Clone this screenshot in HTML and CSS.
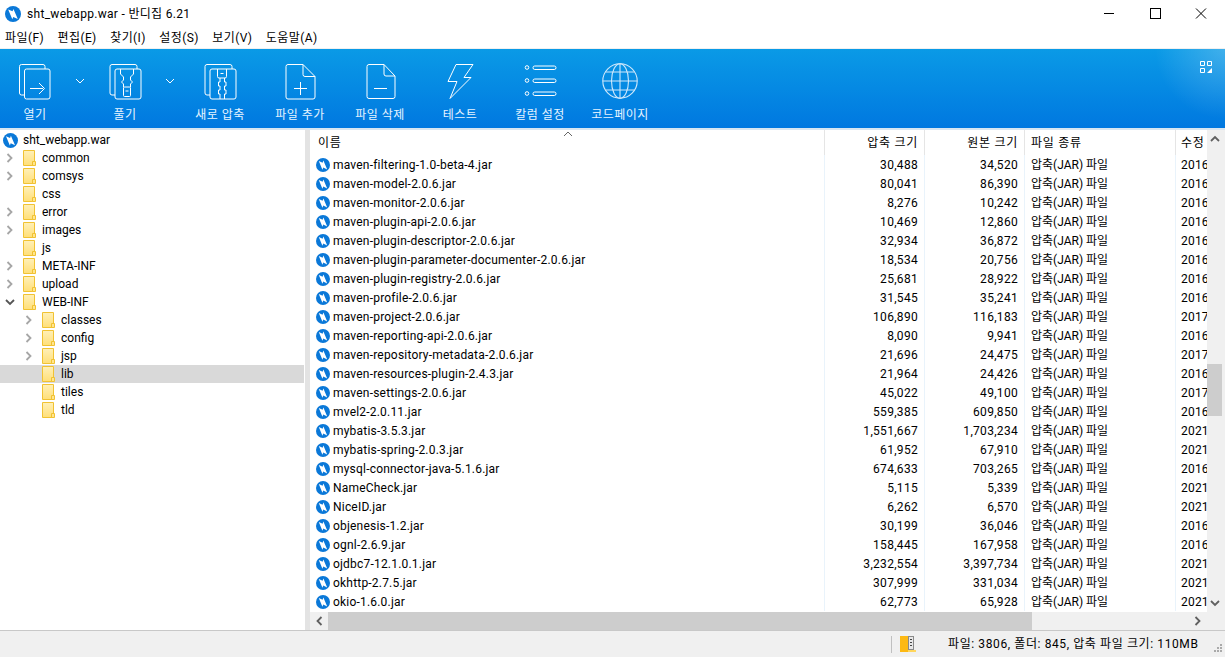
FILE: index.html
```html
<!DOCTYPE html>
<html lang="ko">
<head>
    <meta charset="UTF-8">
    <title>sht_webapp.war - 반디집 6.21</title>
    <link rel="stylesheet" href="styles.css">
</head>
<body>
    <svg class="defs" width="0" height="0">
        <defs>
            <linearGradient id="folderFill" x1="0" y1="0" x2="0" y2="1">
                <stop offset="0" stop-color="#fff0b8"/>
                <stop offset="1" stop-color="#ffdf78"/>
            </linearGradient>
        </defs>
        <symbol id="bz" viewBox="0 0 14 14">
            <circle cx="7" cy="7" r="7" fill="#0a78d8"/>
            <path d="M2.800 3 6.600 4.700 7.400 2.600l3.800 8.800-4-1.800-.8 2.100z" fill="#fff"/>
        </symbol>
        <symbol id="folder" viewBox="0 0 13 16">
            <path d="M.5.5h11v13.500h-1.500v1.500H.5z" fill="url(#folderFill)" stroke="#f1c232"/>
            <path d="M9.500 15.500v-4h3v4z" fill="#ffe58f" stroke="#f1c232"/>
        </symbol>
        <symbol id="right" viewBox="0 0 10 12">
            <path d="M2.500 2 6.500 6l-4 4" fill="none" stroke="currentColor" stroke-width="1.800"/>
        </symbol>
        <symbol id="down" viewBox="0 0 10 12">
            <path d="M1 4l4 4 4-4" fill="none" stroke="currentColor" stroke-width="1.800"/>
        </symbol>
        <symbol id="caret" viewBox="0 0 10 6">
            <path d="M1 1l4 4 4-4" fill="none" stroke="currentColor"/>
        </symbol>
    </svg>

    <header class="titlebar">
        <svg class="title-icon"><use href="#bz"/></svg>
        <span class="title-text">sht_webapp.war - 반디집 6.21</span>
        <div class="win-buttons">
            <svg class="win-btn" viewBox="0 0 46 20"><path d="M18 9.500h10" stroke="#000"/></svg>
            <svg class="win-btn" viewBox="0 0 46 20"><rect x="18.500" y="4.500" width="10" height="10" fill="none" stroke="#000"/></svg>
            <svg class="win-btn" viewBox="0 0 46 20"><path d="M18 4.500l10 10M28 4.500l-10 10" stroke="#000" fill="none"/></svg>
        </div>
    </header>

    <nav class="menubar">
        <span>파일(F)</span>
        <span>편집(E)</span>
        <span>찾기(I)</span>
        <span>설정(S)</span>
        <span>보기(V)</span>
        <span>도움말(A)</span>
    </nav>

    <section class="toolbar">
        <div class="tool tool-split">
            <svg class="tool-icon" viewBox="0 0 40 40">
                <path d="M9.500 35H6.500a2 2 0 0 1-2-2V6.500a2 2 0 0 1 2-2H28a2 2 0 0 1 2 2V9"/>
                <rect x="9.500" y="9" width="25.500" height="30" rx="2"/>
                <path d="M15 28.500h13M24 23l5.500 5.500-5.500 5.500"/>
            </svg>
            <span>열기</span>
        </div>
        <svg class="tool-caret"><use href="#caret"/></svg>
        <div class="tool tool-split">
            <svg class="tool-icon" viewBox="0 0 40 40">
                <path d="M10 35H7a2 2 0 0 1-2-2V6.500a2 2 0 0 1 2-2h23a2 2 0 0 1 2 2V9"/>
                <rect x="10" y="9" width="26" height="30" rx="2"/>
                <path d="M15.500 9v5l3 3v3l-2 2 2 2v3M28.500 9v5l-3 3v3l2 2-2 2v3"/>
                <rect x="18.500" y="27" width="7" height="9.500" rx="1"/>
                <path d="M20.500 31h3"/>
            </svg>
            <span>풀기</span>
        </div>
        <svg class="tool-caret"><use href="#caret"/></svg>
        <div class="tool">
            <svg class="tool-icon" viewBox="0 0 40 40">
                <path d="M10 35H7a2 2 0 0 1-2-2V6.500a2 2 0 0 1 2-2h23a2 2 0 0 1 2 2V9"/>
                <rect x="10" y="9" width="26" height="30" rx="2"/>
                <path d="M17.500 9v7.500a1.500 1.500 0 0 0 1.500 1.500h6a1.500 1.500 0 0 0 1.500-1.500V9M20.500 13.500h3"/>
                <path d="M20 18v4h-1.500v4H20v4h-1.500v4H20v5M24.500 18v4H26v4h-1.500v4H26v4h-1.500v5"/>
            </svg>
            <span>새로 압축</span>
        </div>
        <div class="tool">
            <svg class="tool-icon" viewBox="0 0 40 40">
                <path d="M23 4.500H8a2 2 0 0 0-2 2V37a2 2 0 0 0 2 2h25a2 2 0 0 0 2-2V16.500z"/>
                <path d="M23 4.500v10a2 2 0 0 0 2 2h10"/>
                <path d="M20.500 22v13M14 28.500h13"/>
            </svg>
            <span>파일 추가</span>
        </div>
        <div class="tool">
            <svg class="tool-icon" viewBox="0 0 40 40">
                <path d="M24 4.500H9a2 2 0 0 0-2 2V36.500a2 2 0 0 0 2 2h24a2 2 0 0 0 2-2V16z"/>
                <path d="M24 4.500v9.500a2 2 0 0 0 2 2h9"/>
                <path d="M14 28.500h13"/>
            </svg>
            <span>파일 삭제</span>
        </div>
        <div class="tool">
            <svg class="tool-icon" viewBox="0 0 40 40">
                <path d="M16 4.500h17L24 17.500h7L10 38.500l7-17H8z"/>
            </svg>
            <span>테스트</span>
        </div>
        <div class="tool">
            <svg class="tool-icon" viewBox="0 0 40 40">
                <circle cx="7" cy="7.500" r="1.800"/>
                <circle cx="7" cy="20.500" r="1.800"/>
                <circle cx="7" cy="33.500" r="1.800"/>
                <rect x="13" y="6" width="23" height="3.500" rx="1.700"/>
                <rect x="13" y="19" width="23" height="3.500" rx="1.700"/>
                <rect x="13" y="32" width="23" height="3.500" rx="1.700"/>
            </svg>
            <span>칼럼 설정</span>
        </div>
        <div class="tool">
            <svg class="tool-icon globe" viewBox="0 0 40 40">
                <circle cx="20" cy="21" r="17.200"/>
                <ellipse cx="20" cy="21" rx="8.500" ry="17.200"/>
                <path d="M20 3.800v34.400M2.800 21h34.400M5.500 12h29M5.500 30h29"/>
            </svg>
            <span>코드페이지</span>
        </div>
        <svg class="view-toggle" viewBox="0 0 12 12">
            <path d="M.5.5h4v4h-4zM7.500.5h4v4h-4zM.5 7.500h4v4h-4z" fill="none" stroke="#fff"/>
            <path d="M12 7v5H7z" fill="#fff"/>
        </svg>
    </section>

    <main class="content">
        <aside class="tree">
            <div class="node root"><svg class="node-logo"><use href="#bz"/></svg>sht_webapp.war</div>
            <div class="node"><svg class="arrow"><use href="#right"/></svg><svg class="folder"><use href="#folder"/></svg>common</div>
            <div class="node"><svg class="arrow"><use href="#right"/></svg><svg class="folder"><use href="#folder"/></svg>comsys</div>
            <div class="node no-arrow"><svg class="folder"><use href="#folder"/></svg>css</div>
            <div class="node"><svg class="arrow"><use href="#right"/></svg><svg class="folder"><use href="#folder"/></svg>error</div>
            <div class="node"><svg class="arrow"><use href="#right"/></svg><svg class="folder"><use href="#folder"/></svg>images</div>
            <div class="node no-arrow"><svg class="folder"><use href="#folder"/></svg>js</div>
            <div class="node"><svg class="arrow"><use href="#right"/></svg><svg class="folder"><use href="#folder"/></svg>META-INF</div>
            <div class="node"><svg class="arrow"><use href="#right"/></svg><svg class="folder"><use href="#folder"/></svg>upload</div>
            <div class="node"><svg class="arrow open"><use href="#down"/></svg><svg class="folder"><use href="#folder"/></svg>WEB-INF</div>
            <div class="node sub"><svg class="arrow"><use href="#right"/></svg><svg class="folder"><use href="#folder"/></svg>classes</div>
            <div class="node sub"><svg class="arrow"><use href="#right"/></svg><svg class="folder"><use href="#folder"/></svg>config</div>
            <div class="node sub"><svg class="arrow"><use href="#right"/></svg><svg class="folder"><use href="#folder"/></svg>jsp</div>
            <div class="node sub no-arrow selected"><svg class="folder"><use href="#folder"/></svg>lib</div>
            <div class="node sub no-arrow"><svg class="folder"><use href="#folder"/></svg>tiles</div>
            <div class="node sub no-arrow"><svg class="folder"><use href="#folder"/></svg>tld</div>
        </aside>
        <div class="splitter"></div>
        <section class="list">
            <div class="list-view">
                <div class="list-main">
                    <div class="row head">
                        <div class="c-name">이름<svg class="sort"><use href="#caret"/></svg></div>
                        <div class="c-num">압축 크기</div>
                        <div class="c-num">원본 크기</div>
                        <div class="c-type">파일 종류</div>
                        <div class="c-date">수정</div>
                    </div>
                    <div id="rows"></div>
                </div>
                <div class="vscroll">
                    <svg class="sb-up"><use href="#down"/></svg>
                    <div class="vthumb"></div>
                    <svg class="sb-down"><use href="#down"/></svg>
                </div>
            </div>
            <div class="hscroll">
                <svg class="sb-left"><use href="#right"/></svg>
                <div class="hthumb"></div>
                <svg class="sb-right"><use href="#right"/></svg>
            </div>
        </section>
    </main>

    <footer class="statusbar">
        <div class="status-sep"></div>
        <svg class="status-icon" viewBox="0 0 16 16">
            <path d="M0 0h8v16H0z" fill="#fdb913"/>
            <path d="M8 0h6v14H8z" fill="#8a8a8a"/>
            <path d="M9 1h4v12H9z" fill="#e8e8e8"/>
            <path d="M10 3h2v1h-2zM10 6h2v1h-2zM10 9h2v1h-2z" fill="#444"/>
            <path d="M8 14h8v2H8z" fill="#ffd65c"/>
        </svg>
        <span class="status-text">파일: 3806, 폴더: 845, 압축 파일 크기: 110MB</span>
        <svg class="grip" viewBox="0 0 12 12">
            <path d="M9 1h2v2H9zM6 4h2v2H6zM9 4h2v2H9zM3 7h2v2H3zM6 7h2v2H6zM9 7h2v2H9z" fill="#aaa"/>
        </svg>
    </footer>

    <script>
        const files = [
            ['maven-filtering-1.0-beta-4.jar', '30,488', '34,520', '2016'],
            ['maven-model-2.0.6.jar', '80,041', '86,390', '2016'],
            ['maven-monitor-2.0.6.jar', '8,276', '10,242', '2016'],
            ['maven-plugin-api-2.0.6.jar', '10,469', '12,860', '2016'],
            ['maven-plugin-descriptor-2.0.6.jar', '32,934', '36,872', '2016'],
            ['maven-plugin-parameter-documenter-2.0.6.jar', '18,534', '20,756', '2016'],
            ['maven-plugin-registry-2.0.6.jar', '25,681', '28,922', '2016'],
            ['maven-profile-2.0.6.jar', '31,545', '35,241', '2016'],
            ['maven-project-2.0.6.jar', '106,890', '116,183', '2017'],
            ['maven-reporting-api-2.0.6.jar', '8,090', '9,941', '2016'],
            ['maven-repository-metadata-2.0.6.jar', '21,696', '24,475', '2017'],
            ['maven-resources-plugin-2.4.3.jar', '21,964', '24,426', '2016'],
            ['maven-settings-2.0.6.jar', '45,022', '49,100', '2017'],
            ['mvel2-2.0.11.jar', '559,385', '609,850', '2016'],
            ['mybatis-3.5.3.jar', '1,551,667', '1,703,234', '2021'],
            ['mybatis-spring-2.0.3.jar', '61,952', '67,910', '2021'],
            ['mysql-connector-java-5.1.6.jar', '674,633', '703,265', '2016'],
            ['NameCheck.jar', '5,115', '5,339', '2021'],
            ['NiceID.jar', '6,262', '6,570', '2021'],
            ['objenesis-1.2.jar', '30,199', '36,046', '2016'],
            ['ognl-2.6.9.jar', '158,445', '167,958', '2016'],
            ['ojdbc7-12.1.0.1.jar', '3,232,554', '3,397,734', '2021'],
            ['okhttp-2.7.5.jar', '307,999', '331,034', '2021'],
            ['okio-1.6.0.jar', '62,773', '65,928', '2021']
        ];

        const rows = document.getElementById('rows');
        rows.innerHTML = files.map(f => `<div class="row">
            <div class="c-name"><svg class="jar"><use href="#bz"/></svg>${f[0]}</div>
            <div class="c-num">${f[1]}</div>
            <div class="c-num">${f[2]}</div>
            <div class="c-type">압축(JAR) 파일</div>
            <div class="c-date">${f[3]}</div>
        </div>`).join('');
    </script>
</body>
</html>
```

FILE: styles.css
```css
* {
    box-sizing: border-box;
}
html, body {
    height: 100%;
}
body {
    margin: 0;
    display: flex;
    flex-direction: column;
    overflow: hidden;
    background: #fff;
    color: #000;
    font-family: Roboto, "Noto Sans CJK KR", sans-serif;
    font-size: 12px;
    line-height: 16px;
}
.defs {
    position: absolute;
}
svg {
    display: block;
    flex: none;
}

/* title + menu */
.titlebar {
    height: 27px;
    display: flex;
    align-items: center;
    padding-left: 5px;
}
.title-icon {
    width: 16px;
    height: 16px;
    margin-right: 6px;
}
.title-text {
    flex: 1;
    letter-spacing: .3px;
}
.win-buttons {
    display: flex;
    margin-right: 1px;
}
.win-btn {
    width: 46px;
    height: 20px;
}
.menubar {
    height: 22px;
    display: flex;
    align-items: center;
    padding-left: 5px;
    border-bottom: 1px solid #f0f0f0;
}
.menubar span {
    margin-right: 13.5px;
    letter-spacing: .4px;
}

/* toolbar */
.toolbar {
    position: relative;
    height: 81px;
    display: flex;
    background: radial-gradient(circle at 100% 0, rgba(255, 255, 255, .22), rgba(255, 255, 255, 0) 70px), linear-gradient(#0a9ae6, #0078e0);
    border-bottom: 2px solid #d8e6f2;
    color: #fff;
}
.tool {
    width: 80px;
    display: flex;
    flex-direction: column;
    align-items: center;
    padding-top: 11px;
}
.tool-split {
    width: 70px;
}
.tool span {
    margin-top: 7px;
    letter-spacing: .5px;
    color: #e6f4ff;
}
.tool-icon {
    width: 40px;
    height: 40px;
    fill: none;
    stroke: #fff;
    stroke-width: 1;
}
.globe {
    stroke: #cfe8fb;
    stroke-width: 1.1;
}
.tool-caret {
    width: 20px;
    height: 6px;
    margin-top: 29px;
    color: #fff;
}
.view-toggle {
    position: absolute;
    top: 12px;
    right: 13px;
    width: 12px;
    height: 12px;
}

/* tree + list */
.content {
    flex: 1;
    min-height: 0;
    display: flex;
}
.tree {
    width: 305px;
    padding: 1px 1px 0 0;
    flex: none;
}
.node {
    height: 18px;
    display: flex;
    align-items: center;
    padding-left: 5px;
}
.root {
    padding-left: 3px;
}
.node-logo {
    width: 15px;
    height: 15px;
    margin-right: 5px;
}
.arrow {
    width: 10px;
    height: 12px;
    margin-right: 8px;
    color: #a6a6a6;
}
.arrow.open {
    color: #555;
}
.no-arrow {
    padding-left: 23px;
}
.folder {
    width: 13px;
    height: 16px;
    margin-right: 6px;
}
.sub {
    padding-left: 24px;
}
.sub.no-arrow {
    padding-left: 42px;
}
.selected {
    background: #d9d9d9;
}
.splitter {
    width: 5px;
    background: #e3e3e3;
    flex: none;
}
.list {
    flex: 1;
    min-width: 0;
    display: flex;
    flex-direction: column;
}
.list-view {
    flex: 1;
    min-height: 0;
    display: flex;
}
.list-main {
    flex: 1;
    min-width: 0;
    overflow: hidden;
}
.row {
    height: 19px;
    display: flex;
    align-items: center;
    white-space: nowrap;
    letter-spacing: .2px;
}
.row > div {
    height: 100%;
    display: flex;
    align-items: center;
    flex: none;
    border-right: 1px solid #e9f3fb;
}
.head {
    height: 25px;
    letter-spacing: .7px;
}
.head > div {
    border-right-color: #e5e5e5;
}
.c-name {
    position: relative;
    width: 515px;
    padding-left: 6px;
}
.head .c-name {
    padding-left: 8px;
}
.c-num {
    width: 100px;
    padding-right: 6px;
    justify-content: flex-end;
}
.row:not(.head) .c-num {
    letter-spacing: .3px;
}
.c-type {
    width: 151px;
    padding-left: 6px;
}
.row:not(.head) .c-type {
    letter-spacing: 0;
}
.row > .c-date {
    width: 32px;
    padding-left: 5px;
    border-right: 0;
    overflow: hidden;
}
.jar {
    width: 14px;
    height: 14px;
    margin-right: 3px;
}
.sort {
    position: absolute;
    top: 1px;
    left: 253px;
    width: 10px;
    height: 6px;
    color: #666;
    transform: rotate(180deg);
}
.vscroll {
    position: relative;
    width: 18px;
    flex: none;
    background: #f0f0f0;
}
.vthumb {
    position: absolute;
    top: 234px;
    left: 0;
    width: 15px;
    height: 52px;
    background: #cdcdcd;
}
.sb-up, .sb-down {
    position: absolute;
    left: 3px;
    width: 10px;
    height: 12px;
    color: #606060;
}
.sb-up {
    top: 3px;
    transform: rotate(180deg);
}
.sb-down {
    bottom: 3px;
}
.hscroll {
    height: 18px;
    display: flex;
    align-items: center;
    background: #f0f0f0;
}
.sb-left, .sb-right {
    width: 10px;
    height: 12px;
    color: #606060;
}
.sb-left {
    margin: 0 4px;
    transform: rotate(180deg);
}
.hthumb {
    width: 704px;
    height: 100%;
    background: #cdcdcd;
}
.sb-right {
    margin-left: 161px;
}

/* status */
.statusbar {
    height: 27px;
    display: flex;
    align-items: center;
    background: #f0f0f0;
    border-top: 1px solid #c8c8c8;
    padding-left: 891px;
}
.status-sep {
    width: 1px;
    height: 17px;
    background: #c0c0c0;
    margin-right: 8px;
}
.status-icon {
    width: 16px;
    height: 16px;
    margin-right: 32px;
}
.status-text {
    white-space: nowrap;
    letter-spacing: .6px;
}
.grip {
    position: absolute;
    right: 2px;
    bottom: 2px;
    width: 12px;
    height: 12px;
}
```
